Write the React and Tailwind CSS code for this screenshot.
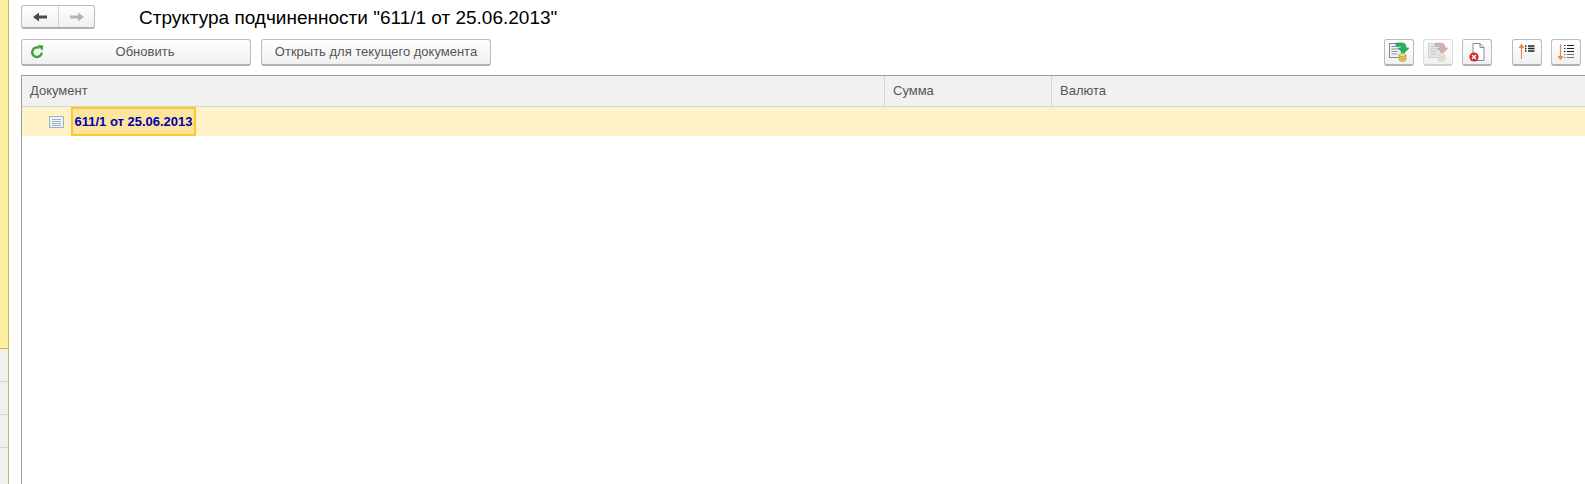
import React from 'react';

const btn = 'h-[27px] rounded-[3px] border border-[#bcbcbc] border-b-2 border-b-[#b0b0b0] bg-gradient-to-b from-white to-[#f0f0f0] flex items-center justify-center';

function ToolButton({ children, disabled, className = '' }) {
  return (
    <div className={`${btn} w-[30px] shrink-0 ${disabled ? '!border-[#dcdcdc] !border-b-[#d0d0d0]' : ''} ${className}`}>
      {children}
    </div>
  );
}

function DocIcon({ faded }) {
  return (
    <svg width="24" height="24" viewBox="0 0 24 24" className={faded ? 'opacity-50' : ''}>
      <rect x="2.5" y="3.5" width="12" height="14" fill={faded ? '#d8d8d8' : '#eef2f6'} stroke={faded ? '#a8a8a8' : '#7f8c9c'} />
      <path d="M4.5 6.5h8M4.5 9h8M4.5 11.5h6M4.5 14h6" stroke="#8a96a3" />
      <path d="M9 3h6c3 0 4 2 4 4v1h3l-5.5 5.5L11 8h3V7c0-.7-.4-1-1-1H9z" fill={faded ? '#a86a6a' : '#1fb85c'} stroke={faded ? '#8f5555' : '#17924a'} strokeWidth=".6" />
      <ellipse cx="15.5" cy="15" rx="3.4" ry="1.5" fill={faded ? '#dcd8bc' : '#f6e08a'} stroke={faded ? '#bdb88f' : '#b59a3a'} strokeWidth=".6" />
      <path d="M12.1 15v5c0 2 6.8 2 6.8 0v-5c0 2-6.8 2-6.8 0z" fill={faded ? '#d4cfa8' : '#e9c552'} stroke={faded ? '#bdb88f' : '#b59a3a'} strokeWidth=".6" />
      <path d="M12.1 17.5c0 2 6.8 2 6.8 0" fill="none" stroke={faded ? '#bdb88f' : '#b59a3a'} strokeWidth=".6" />
    </svg>
  );
}

export default function App() {
  return (
    <div className="flex h-[484px] w-[1585px] overflow-hidden bg-white font-['Liberation_Sans',Arial,sans-serif] text-[13px] text-[#555555]">
      {/* левая полоса */}
      <div className="flex w-[9px] shrink-0 flex-col border-r border-[#c9b458]">
        <div className="h-[349px] shrink-0 border-b border-[#c9b458] bg-[#fdeea0]" />
        {[0, 1, 2].map((i) => (
          <div key={i} className="h-[33px] shrink-0 border-b border-[#d4d4d4] bg-[#f0f0f0]" />
        ))}
        <div className="flex-1 bg-[#f0f0f0]" />
      </div>

      <div className="flex min-w-0 flex-1 flex-col pl-3 pr-1">
        <div className="flex h-[39px] shrink-0 items-start">
          <div className={`${btn} mt-[5px] !h-[24px] w-[74px]`}>
            <div className="flex h-full w-[37px] items-center justify-center border-r border-[#d4d4d4]">
              <svg width="16" height="12" viewBox="0 0 16 12">
                <path d="M1 6l6-4.5V4.5h8v3H7v3z" fill="#4a4a4a" />
              </svg>
            </div>
            <div className="flex h-full flex-1 items-center justify-center">
              <svg width="16" height="12" viewBox="0 0 16 12">
                <path d="M15 6L9 1.5V4.5H1v3h8v3z" fill="#b5b5b5" />
              </svg>
            </div>
          </div>
          <h1 className="ml-[44px] mt-[7px] text-[19px] leading-[22px] font-normal whitespace-nowrap text-black">
            Структура подчиненности "611/1 от 25.06.2013"
          </h1>
        </div>

        <div className="flex h-[36px] shrink-0 items-start">
          <div className={`${btn} relative w-[230px] pl-[18px]`}>
            <svg width="14" height="14" viewBox="0 0 14 14" className="absolute left-2 top-[5px]">
              <path d="M11.8 7.6A4.8 4.8 0 1 1 9.4 3" fill="none" stroke="#3aa335" strokeWidth="2.4" />
              <path d="M7.6 0l5.6.6-.8 5.4z" fill="#3aa335" />
            </svg>
            <span>Обновить</span>
          </div>
          <div className={`${btn} ml-[10px] w-[230px]`}>
            <span>Открыть для текущего документа</span>
          </div>
          <div className="ml-auto flex">
            <ToolButton><DocIcon /></ToolButton>
            <ToolButton disabled className="ml-[9px]"><DocIcon faded /></ToolButton>
            <ToolButton className="ml-[9px]">
              <svg width="22" height="22" viewBox="0 0 22 22">
                <path d="M7 2.5h7l4 4v13H7z" fill="#fff" stroke="#7f8c9c" />
                <path d="M14 2.5v4h4" fill="none" stroke="#7f8c9c" />
                <circle cx="8" cy="16" r="4.6" fill="#d8232a" />
                <path d="M6 14l4 4m0-4l-4 4" stroke="#fff" strokeWidth="1.5" />
              </svg>
            </ToolButton>
            <ToolButton className="ml-[20px]">
              <svg width="22" height="22" viewBox="0 0 22 22">
                <path d="M5.5 18V4" stroke="#f08a4b" strokeWidth="1.2" />
                <path d="M5.5 2.5L2.5 7h6z" fill="#f08a4b" />
                <path d="M9 5h1.5M9 7.5h1.5M9 10h1.5" stroke="#222" strokeWidth="1.3" />
                <path d="M12 5h6.5M12 7.5h6.5M12 10h6.5" stroke="#222" strokeWidth="1.3" />
              </svg>
            </ToolButton>
            <ToolButton className="ml-[9px]">
              <svg width="22" height="22" viewBox="0 0 22 22">
                <path d="M5.5 3v14" stroke="#f08a4b" strokeWidth="1.2" />
                <path d="M5.5 19.5l-3-4.5h6z" fill="#f08a4b" />
                <path d="M9 4.5h1.5M9 7.5h1.5M9 10.5h1.5" stroke="#222" strokeWidth="1.2" />
                <path d="M12 4.5h7M12 7.5h7M12 10.5h7" stroke="#222" strokeWidth="1.2" />
                <path d="M9 13.5h1.5M9 16.5h1.5M12 13.5h7M12 16.5h7" stroke="#777" strokeWidth="1.2" />
              </svg>
            </ToolButton>
          </div>
        </div>

        <div className="mr-[-4px] flex min-h-0 flex-1 flex-col border-l border-t border-[#a0a0a0]">
          <div className="flex h-[31px] shrink-0 items-center border-b border-[#d4d4d4] bg-[#f1f1f1]">
            <div className="flex h-full w-[863px] items-center border-r border-[#d4d4d4] pl-2">Документ</div>
            <div className="flex h-full w-[167px] items-center border-r border-[#d4d4d4] pl-2">Сумма</div>
            <div className="pl-2">Валюта</div>
          </div>
          <div className="flex h-[29px] shrink-0 items-center bg-[#fef2c8]">
            <svg width="15" height="12" viewBox="0 0 15 12" className="ml-[27px]">
              <rect x=".5" y=".5" width="14" height="11" fill="#eef4fa" stroke="#9fb0c2" />
              <path d="M3 3.5h9M3 5.5h9M3 7.5h9M3 9.5h9" stroke="#9fb0c2" />
            </svg>
            <div className="ml-[7px] flex h-[29px] w-[125px] items-center justify-center border-2 border-[#fcc82a] bg-[#fde59b] font-bold whitespace-nowrap text-[#0000b0]">
              611/1 от 25.06.2013
            </div>
          </div>
        </div>
      </div>
    </div>
  );
}
